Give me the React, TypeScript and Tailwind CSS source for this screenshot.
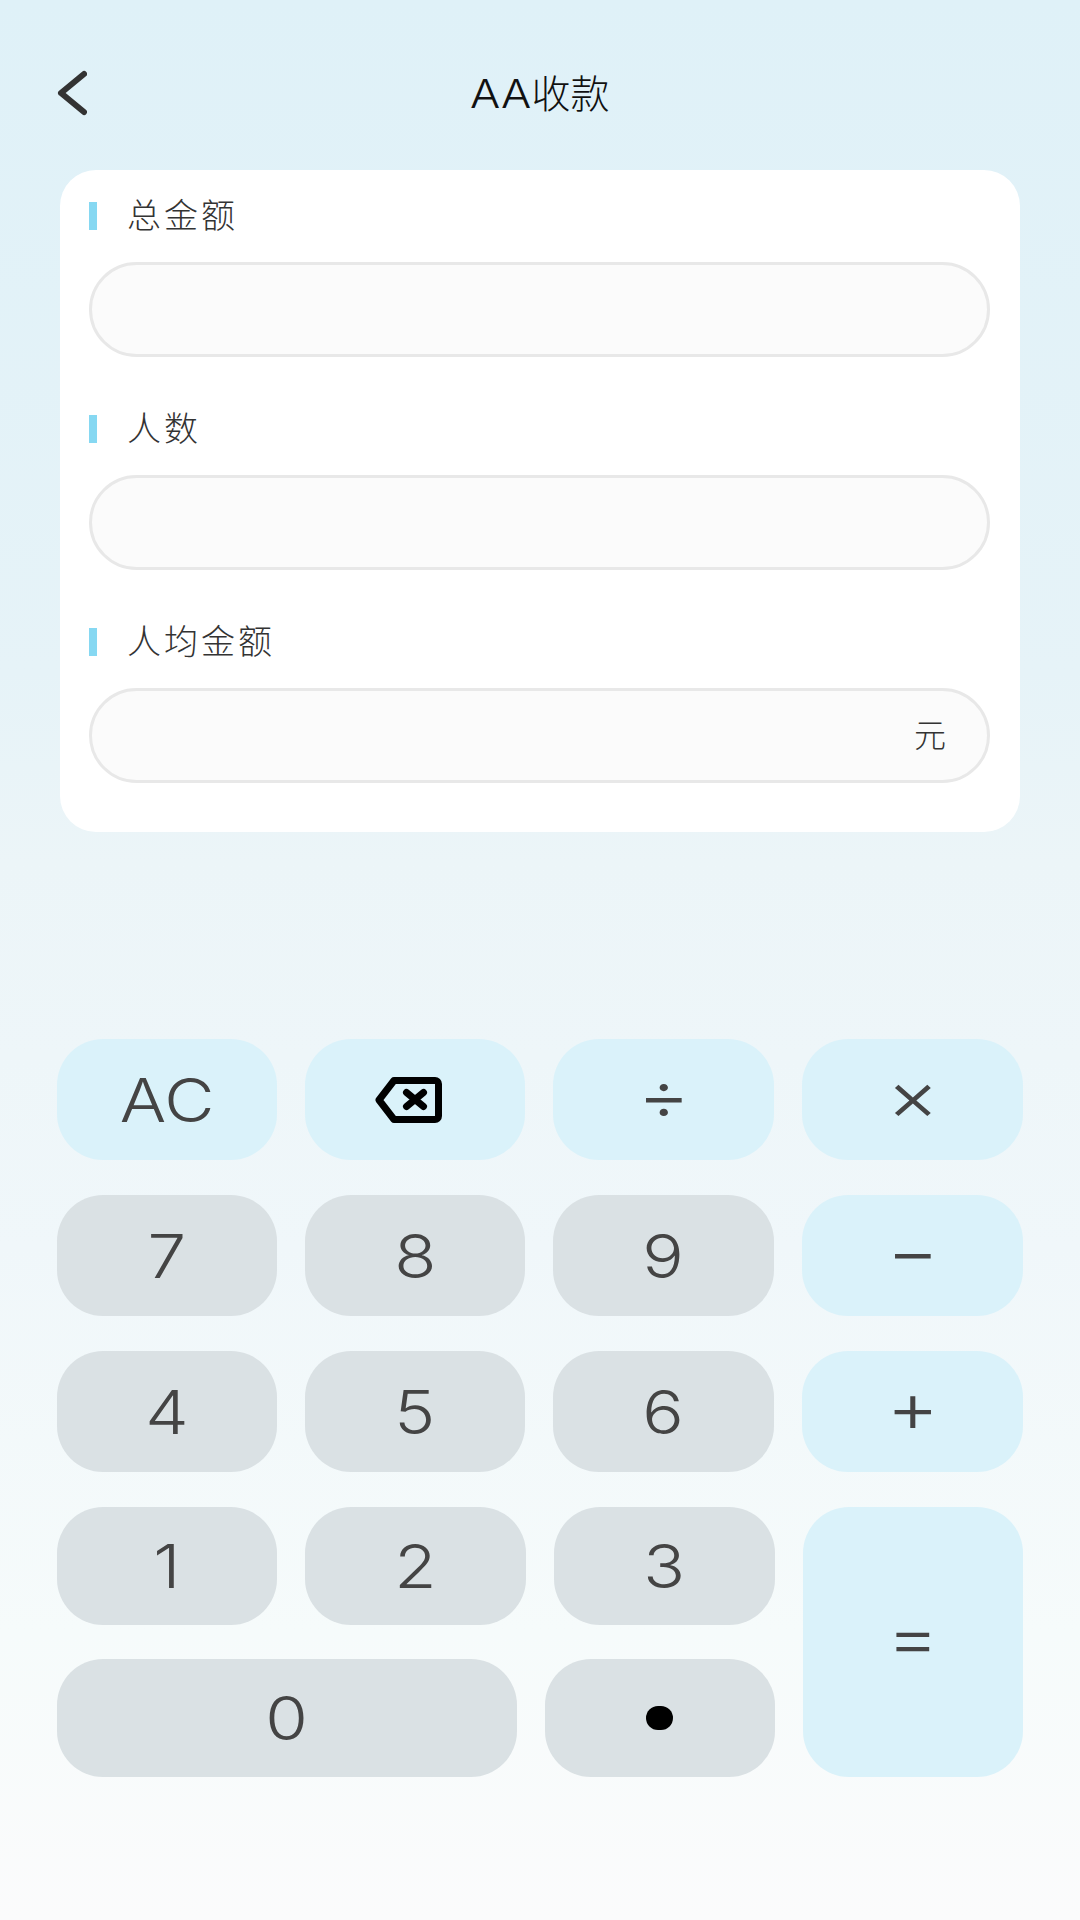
const labelFont = "[font-family:'Noto_Sans_CJK_SC','Noto_Sans',sans-serif]";
const keyFont = "[font-family:Inter,sans-serif] font-light";
const opClass = "pb-[10px] text-[70px]";

function Field({ label, unit, first }: { label: string; unit?: string; first?: boolean }) {
    return (
        <div className={first ? "" : "mt-[58px]"}>
            <div className="flex h-[28px] items-center">
                <span className="h-[28px] w-[8px] bg-[#86d8f2]" />
                <span className={`mb-[4px] ml-[30px] text-[34px] leading-[28px] tracking-[3px] text-[#333333] font-light ${labelFont}`}>{label}</span>
            </div>
            <div className="mt-[32px] flex h-[95px] items-center justify-end rounded-[48px] border-[3px] border-[#e8e8e8] bg-[#fbfbfb] pr-[41px]">
                {unit && <span className={`mb-[6px] text-[32px] leading-none text-[#333333] font-light ${labelFont}`}>{unit}</span>}
            </div>
        </div>
    );
}

function Key({ label, blue, className = "", children }: { label?: string; blue?: boolean; className?: string; children?: React.ReactNode }) {
    return (
        <div className={`flex items-center justify-center rounded-[46px] text-[60px] leading-none text-[#444444] ${keyFont} ${blue ? "bg-[#daf2fa]" : "bg-[#dae1e4]"} ${className}`}>
            {label && <span className="inline-block scale-x-[1.15]">{label}</span>}
            {children}
        </div>
    );
}

export default function App() {
    return (
        <div className="flex h-[1920px] w-[1080px] flex-col overflow-hidden bg-[linear-gradient(180deg,#dff1f8_0%,#e6f3f8_35%,#ecf5f8_45%,#f0f7fa_65%,#f6fbfb_85%,#fbfbfc_100%)]">
            <div className="mt-[70px] grid h-[46px] grid-cols-[1fr_auto_1fr] items-center px-[57px]">
                <svg width="30" height="46" viewBox="0 0 30 46" fill="none" stroke="#333333" strokeWidth="6" strokeLinecap="round" strokeLinejoin="round">
                    <path d="M27 4 L4 23 L27 42" />
                </svg>
                <div className="text-[39px] leading-none text-[#111111] font-light [font-family:Inter,'Noto_Sans_CJK_SC',sans-serif]">
                    <span className="mr-[8px] inline-block origin-left scale-x-[1.15]">AA</span>收款
                </div>
                <div />
            </div>

            <div className="mx-[60px] mt-[54px] h-[662px] rounded-[36px] bg-white pl-[29px] pr-[30px] pt-[32px]">
                <Field first label="总金额" />
                <Field label="人数" />
                <Field label="人均金额" unit="元" />
            </div>

            <div className="ml-[57px] mt-[207px] w-[966px]">
                <div className="grid grid-cols-[220px_220px_221px_221px] auto-rows-[121px] gap-x-[28px] gap-y-[35px]">
                    <Key blue label="AC" />
                    <Key blue>
                        <svg className="mr-[13px]" width="67" height="46" viewBox="0 0 67 46" fill="none" stroke="#000000" strokeWidth="7" strokeLinecap="round" strokeLinejoin="round">
                            <path d="M4 23 L19 3.5 H60 A3.5 3.5 0 0 1 63.5 7 V39 A3.5 3.5 0 0 1 60 42.5 H19 Z" />
                            <path d="M31.5 15.5 L48.5 29.5 M48.5 15.5 L31.5 29.5" />
                        </svg>
                    </Key>
                    <Key blue label="÷" className={opClass} />
                    <Key blue label="×" className={opClass} />
                    <Key label="7" />
                    <Key label="8" />
                    <Key label="9" />
                    <Key blue label="−" className={opClass} />
                    <Key label="4" />
                    <Key label="5" />
                    <Key label="6" />
                    <Key blue label="+" className={opClass} />
                </div>
                <div className="mt-[35px] flex gap-[28px]">
                    <div className="flex w-[718px] flex-col gap-[34px]">
                        <div className="grid h-[118px] grid-cols-[220px_221px_221px] gap-x-[28px]">
                            <Key label="1" />
                            <Key label="2" />
                            <Key label="3" />
                        </div>
                        <div className="flex h-[118px] gap-[28px]">
                            <Key label="0" className="w-[460px]" />
                            <Key className="flex-1">
                                <span className="mr-[2px] h-[24px] w-[27px] rounded-full bg-black" />
                            </Key>
                        </div>
                    </div>
                    <Key blue label="=" className={`flex-1 ${opClass}`} />
                </div>
            </div>
        </div>
    );
}
